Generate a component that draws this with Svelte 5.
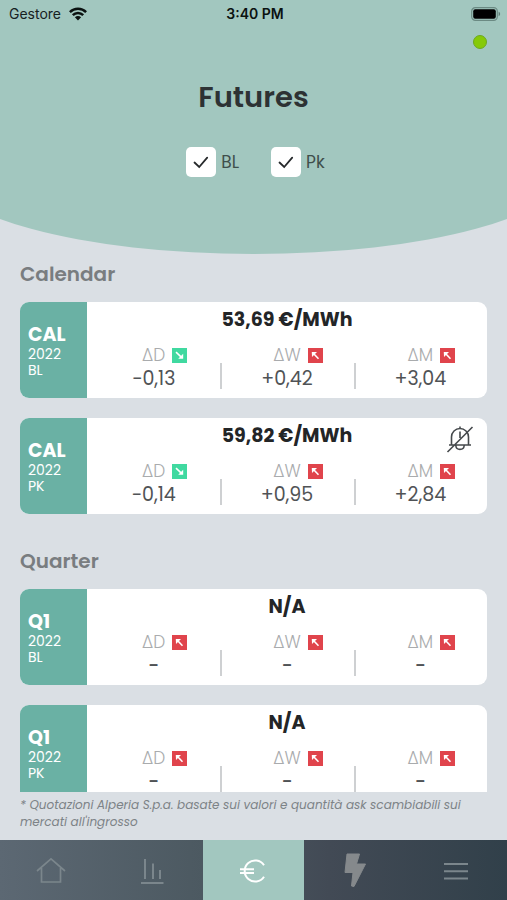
<script>
  let showBase = $state(true);
  let showPeak = $state(true);

  const sections = [
    {
      title: 'Calendar',
      cards: [
        { name: 'CAL', year: '2022', kind: 'BL', price: '53,69 €/MWh', muted: false,
          deltas: [['D', '−0,13', 'down'], ['W', '+0,42', 'up'], ['M', '+3,04', 'up']] },
        { name: 'CAL', year: '2022', kind: 'PK', price: '59,82 €/MWh', muted: true,
          deltas: [['D', '−0,14', 'down'], ['W', '+0,95', 'up'], ['M', '+2,84', 'up']] }
      ]
    },
    {
      title: 'Quarter',
      cards: [
        { name: 'Q1', year: '2022', kind: 'BL', price: 'N/A', muted: false,
          deltas: [['D', '-', 'up'], ['W', '-', 'up'], ['M', '-', 'up']] },
        { name: 'Q1', year: '2022', kind: 'PK', price: 'N/A', muted: false,
          deltas: [['D', '-', 'up'], ['W', '-', 'up'], ['M', '-', 'up']] }
      ]
    }
  ];

  const visible = (card) => (card.kind === 'BL' ? showBase : showPeak);
</script>

{#snippet tick()}
  <svg class="tick" viewBox="0 0 30 30" aria-hidden="true"><path d="M8.5 15.500l4.700 4.500 8-9.300" /></svg>
{/snippet}

<div class="app">
  <header>
    <div class="status">
      <div class="carrier">
        <span>Gestore</span>
        <svg width="18" height="14" viewBox="0 0 18 14" aria-hidden="true">
          <g fill="none" stroke="#0b1211" stroke-width="2.5">
            <path d="M.9 5.100C5.400.7 12.600.7 17.100 5.100" />
            <path d="M3.800 8.200c2.900-2.900 7.500-2.900 10.400 0" />
          </g>
          <path d="M5.900 10.300c1.800-1.600 4.400-1.600 6.200 0L9 13.500z" fill="#0b1211" />
        </svg>
      </div>
      <span class="time">3:40 PM</span>
      <svg class="battery" width="30" height="14" viewBox="0 0 30 14" aria-hidden="true">
        <rect x=".7" y=".7" width="25.600" height="12.600" rx="3.600" fill="none" stroke="#6b8a83" stroke-width="1.200" />
        <rect x="2.200" y="2.200" width="22.600" height="9.600" rx="2" fill="#000" />
        <path d="M27.600 4.800c2 .7 2 3.700 0 4.400z" fill="#5f7d76" />
      </svg>
    </div>
    <div class="live"><span></span></div>
    <h1>Futures</h1>
    <div class="filters">
      <label><span class="box"><input type="checkbox" bind:checked={showBase} />{@render tick()}</span>BL</label>
      <label><span class="box"><input type="checkbox" bind:checked={showPeak} />{@render tick()}</span>Pk</label>
    </div>
  </header>

  <main>
    {#each sections as section}
      <section>
        <h2>{section.title}</h2>
        {#each section.cards.filter(visible) as card}
          <article>
            <div class="tag">
              <strong>{card.name}</strong>
              <span>{card.year}</span>
              <span>{card.kind}</span>
            </div>
            <div class="body">
              <div class="price">{card.price}</div>
              <div class="deltas">
                {#each card.deltas as [period, value, trend]}
                  <div class="delta">
                    <div class="head">
                      <span class="period">Δ{period}</span>
                      <svg class={trend} width="15" height="15" viewBox="0 0 15 15" aria-hidden="true">
                        {#if trend === 'up'}
                          <path class="shaft" d="M5 5l5.500 5.800" /><path class="tip" d="M3.800 4h5.200L4 9z" />
                        {:else}
                          <path class="shaft" d="M4 4.200l5.600 5.200" /><path class="tip" d="M11.200 10.800H6.200l5-5z" />
                        {/if}
                      </svg>
                    </div>
                    <div class="value" class:empty={value === '-'}>{value}</div>
                  </div>
                {/each}
              </div>
            </div>
            {#if card.muted}
              <button class="bell" aria-label="Alerts off">
                <svg width="28" height="28" viewBox="0 0 28 28" aria-hidden="true">
                  <path d="M3 20h22M5.500 20v-8a8.500 8.500 0 0 1 17 0v8M14 3.500V1.500M9.800 20.500c.5 5.200 7.900 5.200 8.400 0M14 6.500v6.500M1.500 27L26.500 2" />
                </svg>
              </button>
            {/if}
          </article>
        {/each}
      </section>
    {/each}
  </main>

  <p class="note">* Quotazioni Alperia S.p.a. basate sui valori e quantità ask scambiabili sui mercati all'ingrosso</p>

  <nav>
    <a href="#home" aria-label="Home">
      <svg width="30" height="28" viewBox="0 0 30 28"><path d="M1 15L15 2.800 29 15M5.500 12v14h19V12" /></svg>
    </a>
    <a href="#charts" aria-label="Charts">
      <svg width="30" height="28" viewBox="0 0 30 28"><path stroke-width="2" d="M8 3v20M16 7.500V23M23 14v9M4 27h22.500" /></svg>
    </a>
    <a href="#futures" aria-label="Futures" class="active">
      <svg width="30" height="28" viewBox="0 0 30 28"><path d="M26 9.300a10.500 10.500 0 1 0 0 11.400M2 13.200h14M2 17h14" /></svg>
    </a>
    <a href="#power" aria-label="Power">
      <svg class="bolt" width="24" height="36" viewBox="0 0 24 36"><path d="M4 2h12.500l-3 10H22.500L11 34.500 8.500 34 10 20.500H2z" /></svg>
    </a>
    <a href="#menu" aria-label="Menu">
      <svg width="30" height="28" viewBox="0 0 30 28"><path stroke-width="2" d="M3 8h24M3 15.300h24M3 22.500h24" /></svg>
    </a>
  </nav>
</div>

<style>
  :global(body) { margin: 0; }
  .app {
    display: flex;
    flex-direction: column;
    height: 100vh;
    overflow: hidden;
    background: #dadfe4;
    color: #2d3234;
    font-family: Poppins, Inter, "Open Sans", sans-serif;
  }
  header {
    position: relative;
    z-index: 0;
    height: 254px;
    flex: none;
    overflow: hidden;
  }
  header::before {
    content: "";
    position: absolute;
    z-index: -1;
    inset: 0 -12%;
    background: #a2c7bf;
    border-radius: 0 0 50% 50% / 0 0 86px 86px;
  }
  .status {
    display: grid;
    grid-template-columns: 1fr auto 1fr;
    align-items: center;
    height: 28px;
    padding: 0 6px 0 9px;
    font: 14px/28px Inter, sans-serif;
    color: #16211f;
  }
  .carrier { display: flex; align-items: center; gap: 8px; }
  .time { font-weight: 600; color: #0b1211; }
  .battery { justify-self: end; }
  .live { display: flex; justify-content: flex-end; padding: 7px 20px 0; }
  .live span {
    box-sizing: border-box;
    width: 14px;
    height: 14px;
    border: 1px solid #6da821;
    border-radius: 50%;
    background: #86ca08;
  }
  h1 {
    margin: 28px 0 0;
    font-size: 29px;
    line-height: 40px;
    font-weight: 600;
    text-align: center;
  }
  .filters { display: flex; justify-content: center; gap: 32px; margin-top: 30px; padding-left: 4px; }
  label { display: flex; align-items: center; gap: 5px; font-size: 17px; line-height: 30px; color: #3f4f4c; }
  .box { position: relative; display: flex; }
  input {
    appearance: none;
    width: 30px;
    height: 30px;
    margin: 0;
    border-radius: 5px;
    background: #fff;
  }
  .tick {
    position: absolute;
    inset: 0;
    fill: none;
    stroke: #26292b;
    stroke-width: 1.8;
    stroke-linecap: round;
    pointer-events: none;
    visibility: hidden;
  }
  input:checked + .tick { visibility: visible; }

  main { flex: 1; min-height: 0; overflow: hidden; padding: 0 20px; }
  h2 {
    margin: 0;
    padding: 4px 0 12px;
    font-size: 20px;
    line-height: 32px;
    font-weight: 600;
    color: #797d80;
  }
  section + section h2 { padding-top: 11px; }
  article {
    position: relative;
    display: flex;
    height: 96px;
    margin-bottom: 20px;
    border-radius: 9px;
    background: #fff;
    overflow: hidden;
  }
  .tag {
    box-sizing: border-box;
    display: flex;
    flex-direction: column;
    justify-content: center;
    width: 67px;
    padding: 2px 0 0 8px;
    background: #6ab1a4;
    color: #fff;
    font-size: 14px;
    line-height: 16px;
  }
  .tag strong { font-size: 19px; line-height: 22px; }
  .body { flex: 1; }
  .price {
    padding-top: 4px;
    font-size: 19px;
    line-height: 28px;
    font-weight: 700;
    text-align: center;
    color: #232527;
  }
  .deltas { display: grid; grid-template-columns: repeat(3, 1fr); padding-top: 11px; }
  .delta { position: relative; }
  .delta + .delta::before {
    content: "";
    position: absolute;
    left: 0;
    bottom: 4px;
    width: 2px;
    height: 26px;
    background: #ced0d2;
  }
  .head {
    display: grid;
    grid-template-columns: 1fr auto 1fr;
    align-items: center;
    column-gap: 7px;
    font-size: 17px;
    line-height: 20px;
    font-weight: 300;
    color: #a9abad;
  }
  .period { grid-column: 2; }
  .up { background: #e0444c; }
  .down { background: #40d9a0; }
  .shaft { stroke: #fff; stroke-width: 1.6; }
  .tip { fill: #fff; }
  .value {
    font-size: 19px;
    line-height: 28px;
    font-weight: 400;
    text-align: center;
    color: #505356;
  }
  .value.empty { font-weight: 500; }
  .bell {
    position: absolute;
    top: 7px;
    right: 13px;
    display: flex;
    padding: 0;
    border: 0;
    background: none;
  }
  .bell path { fill: none; stroke: #45494c; stroke-width: 1.6; }
  .note {
    flex: none;
    margin: 0;
    padding: 4px 20px 10px;
    font-size: 12px;
    line-height: 17px;
    font-style: italic;
    color: #7d8387;
  }
  nav {
    display: grid;
    grid-template-columns: repeat(5, 1fr);
    flex: none;
    height: 60px;
    background: linear-gradient(90deg, #5c6873, #4c5961 40%, #424a55 65%, #31404a);
  }
  nav a { display: flex; align-items: center; justify-content: center; }
  nav svg { fill: none; stroke: #7b868c; stroke-width: 1.7; }
  nav .active { background: #a2c7bf; }
  nav .active svg { stroke: #fff; stroke-width: 2; }
  nav .bolt { fill: #85898c; stroke: #85898c; stroke-width: 1; stroke-linejoin: round; }
</style>
